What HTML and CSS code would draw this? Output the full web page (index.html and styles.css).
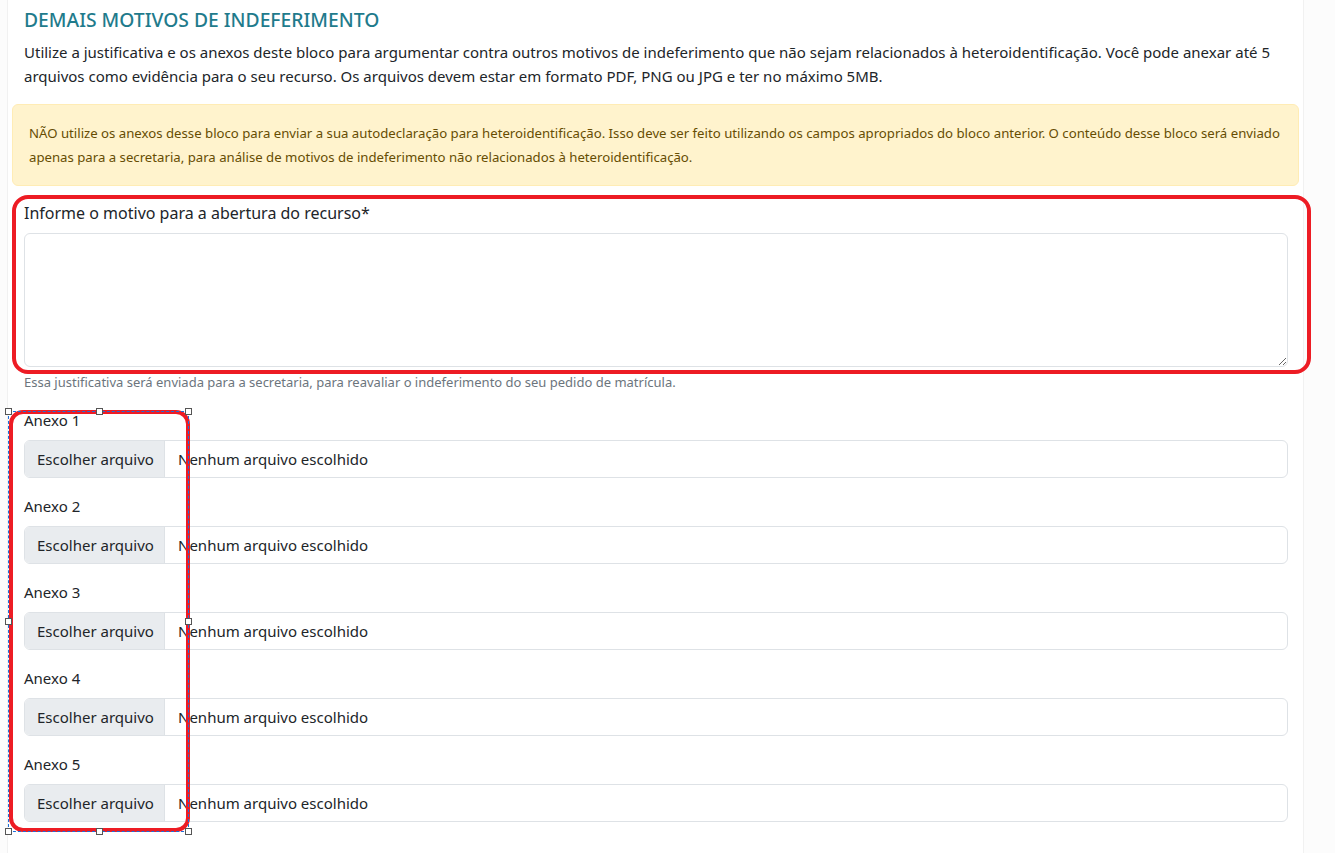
FILE: index.html
```html
<!DOCTYPE html>
<html lang="pt-BR">
<head>
    <meta charset="UTF-8">
    <title>Recurso - Demais motivos</title>
    <link rel="stylesheet" href="styles.css">
</head>
<body>
    <div class="card">
        <div class="section-head">
            <h2>DEMAIS MOTIVOS DE INDEFERIMENTO</h2>
            <p>Utilize a justificativa e os anexos deste bloco para argumentar contra outros motivos de indeferimento que não sejam relacionados à heteroidentificação. Você pode anexar até 5 arquivos como evidência para o seu recurso. Os arquivos devem estar em formato PDF, PNG ou JPG e ter no máximo 5MB.</p>
        </div>

        <div class="alert">
            NÃO utilize os anexos desse bloco para enviar a sua autodeclaração para heteroidentificação. Isso deve ser feito utilizando os campos apropriados do bloco anterior. O conteúdo desse bloco será enviado apenas para a secretaria, para análise de motivos de indeferimento não relacionados à heteroidentificação.
        </div>

        <div class="form">
            <div class="field">
                <label for="motivo" class="label-main">Informe o motivo para a abertura do recurso*</label>
                <textarea id="motivo" class="textarea"></textarea>
                <div class="help">Essa justificativa será enviada para a secretaria, para reavaliar o indeferimento do seu pedido de matrícula.</div>
            </div>

            <div class="field attach">
                <label>Anexo 1</label>
                <div class="file-input"><span class="file-btn">Escolher arquivo</span><span class="file-name">Nenhum arquivo escolhido</span></div>
            </div>
            <div class="field attach">
                <label>Anexo 2</label>
                <div class="file-input"><span class="file-btn">Escolher arquivo</span><span class="file-name">Nenhum arquivo escolhido</span></div>
            </div>
            <div class="field attach">
                <label>Anexo 3</label>
                <div class="file-input"><span class="file-btn">Escolher arquivo</span><span class="file-name">Nenhum arquivo escolhido</span></div>
            </div>
            <div class="field attach">
                <label>Anexo 4</label>
                <div class="file-input"><span class="file-btn">Escolher arquivo</span><span class="file-name">Nenhum arquivo escolhido</span></div>
            </div>
            <div class="field attach">
                <label>Anexo 5</label>
                <div class="file-input"><span class="file-btn">Escolher arquivo</span><span class="file-name">Nenhum arquivo escolhido</span></div>
            </div>
        </div>
    </div>

    <!-- screenshot annotations -->
    <div class="mark mark-motivo"></div>
    <div class="mark mark-anexos"></div>
    <div class="selection">
        <span class="handle h-tl"></span>
        <span class="handle h-tc"></span>
        <span class="handle h-tr"></span>
        <span class="handle h-ml"></span>
        <span class="handle h-mr"></span>
        <span class="handle h-bl"></span>
        <span class="handle h-bc"></span>
        <span class="handle h-br"></span>
    </div>
</body>
</html>
```

FILE: styles.css
```css
body {
    margin: 0;
    background-color: #fcfcfc;
    font-family: "Noto Sans", "Open Sans", sans-serif;
    color: #212529;
}

.card {
    margin-left: 7px;
    width: 1297px;
    min-height: 853px;
    background-color: #fff;
    border-left: 1px solid #f1f1f1;
    border-right: 1px solid #f1f1f1;
    padding: 0 4px;
    box-sizing: border-box;
}

.section-head {
    padding: 8px 11px 0 12px;
}

.section-head h2 {
    margin: 0 0 8px 0;
    font-size: 19.3px;
    font-weight: 500;
    line-height: 24px;
    color: #1f7b8c;
}

.section-head p {
    margin: 0 0 16px 0;
    font-size: 15px;
    line-height: 24px;
}

.alert {
    background-color: #fff3cd;
    border: 1px solid #ffecb5;
    border-radius: 6px;
    color: #664d03;
    font-size: 13.2px;
    line-height: 24px;
    padding: 16px 16px;
}

.form {
    padding: 15px 11px 0 12px;
}

.field label {
    display: block;
    font-size: 15px;
    line-height: 24px;
    margin-bottom: 8px;
}

.field .label-main {
    font-size: 16px;
}

.textarea {
    display: block;
    width: 100%;
    height: 134px;
    box-sizing: border-box;
    border: 1px solid #dee2e6;
    border-radius: 6px;
    margin: 0;
}

.help {
    font-size: 13px;
    color: #6c757d;
    line-height: 20px;
    margin-top: 5px;
}

.attach {
    margin-top: 16px;
}

.file-input {
    display: flex;
    height: 38px;
    box-sizing: border-box;
    border: 1px solid #dee2e6;
    border-radius: 6px;
    overflow: hidden;
    font-size: 15px;
    align-items: center;
    white-space: nowrap;
}

.file-btn {
    background-color: #e9ecef;
    height: 100%;
    display: flex;
    align-items: center;
    box-sizing: border-box;
    padding: 0 12px;
    border-right: 1px solid #dee2e6;
    width: 140px;
}

.file-name {
    padding-left: 13px;
}

/* annotations drawn over the screenshot */
.mark {
    position: absolute;
    border: 4px solid #ed1c24;
    box-sizing: border-box;
}

.mark-motivo {
    left: 12px;
    top: 195px;
    width: 1299px;
    height: 179px;
    border-radius: 16px;
}

.mark-anexos {
    left: 9px;
    top: 410px;
    width: 181px;
    height: 422px;
    border-radius: 14px;
}

.selection {
    position: absolute;
    left: 8px;
    top: 411px;
    width: 181px;
    height: 421px;
    border: 1px dashed #1e6fd9;
    box-sizing: border-box;
}

.handle {
    position: absolute;
    width: 5px;
    height: 5px;
    background: #fff;
    border: 1px solid #555;
}

.h-tl { left: -4px; top: -4px; }
.h-tc { left: 87px; top: -4px; }
.h-tr { right: -4px; top: -4px; }
.h-ml { left: -4px; top: 206px; }
.h-mr { right: -4px; top: 206px; }
.h-bl { left: -4px; bottom: -4px; }
.h-bc { left: 87px; bottom: -4px; }
.h-br { right: -4px; bottom: -4px; }
```
